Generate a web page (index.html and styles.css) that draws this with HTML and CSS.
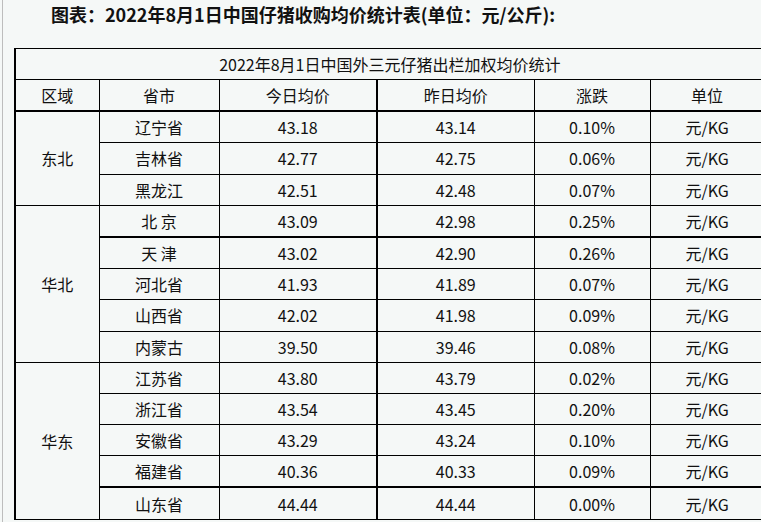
FILE: index.html
```html
<!DOCTYPE html>
<html lang="zh-CN">
<head>
<meta charset="utf-8">
<title>2022年8月1日中国仔猪收购均价统计表</title>
<link rel="stylesheet" href="styles.css">
</head>
<body>
<div class="page">
  <h2 class="heading">图表：2022年8月1日中国仔猪收购均价统计表(单位：元/公斤):</h2>
  <table class="price-table">
    <colgroup>
      <col class="c-region"><col class="c-prov"><col class="c-today"><col class="c-yest"><col class="c-chg"><col class="c-unit">
    </colgroup>
    <thead>
      <tr><th colspan="6" class="caption-cell">2022年8月1日中国外三元仔猪出栏加权均价统计</th></tr>
      <tr class="head-row"><th>区域</th><th>省市</th><th class="sep">今日均价</th><th>昨日均价</th><th>涨跌</th><th>单位</th></tr>
    </thead>
    <tbody>
      <tr><td rowspan="3">东北</td><td>辽宁省</td><td class="sep">43.18</td><td>43.14</td><td>0.10%</td><td>元/KG</td></tr>
      <tr><td>吉林省</td><td class="sep">42.77</td><td>42.75</td><td>0.06%</td><td>元/KG</td></tr>
      <tr><td>黑龙江</td><td class="sep">42.51</td><td>42.48</td><td>0.07%</td><td>元/KG</td></tr>
      <tr class="thick-row"><td rowspan="5" class="region">华北</td><td>北&nbsp;京</td><td class="sep">43.09</td><td>42.98</td><td>0.25%</td><td>元/KG</td></tr>
      <tr><td>天&nbsp;津</td><td class="sep">43.02</td><td>42.90</td><td>0.26%</td><td>元/KG</td></tr>
      <tr><td>河北省</td><td class="sep">41.93</td><td>41.89</td><td>0.07%</td><td>元/KG</td></tr>
      <tr><td>山西省</td><td class="sep">42.02</td><td>41.98</td><td>0.09%</td><td>元/KG</td></tr>
      <tr><td>内蒙古</td><td class="sep">39.50</td><td>39.46</td><td>0.08%</td><td>元/KG</td></tr>
      <tr><td rowspan="5" class="region">华东</td><td>江苏省</td><td class="sep">43.80</td><td>43.79</td><td>0.02%</td><td>元/KG</td></tr>
      <tr><td>浙江省</td><td class="sep">43.54</td><td>43.45</td><td>0.20%</td><td>元/KG</td></tr>
      <tr><td>安徽省</td><td class="sep">43.29</td><td>43.24</td><td>0.10%</td><td>元/KG</td></tr>
      <tr class="thick-row"><td>福建省</td><td class="sep">40.36</td><td>40.33</td><td>0.09%</td><td>元/KG</td></tr>
      <tr><td>山东省</td><td class="sep">44.44</td><td>44.44</td><td>0.00%</td><td>元/KG</td></tr>
    </tbody>
  </table>
</div>
</body>
</html>
```
FILE: styles.css
```css
html, body {
  margin: 0;
  padding: 0;
  background: #f5f8f7;
  overflow: hidden;
}

.page {
  margin-left: 2px;
  border-left: 1px solid #bdbdbd;
  padding-left: 11px;
  min-height: 522px;
  font-family: "Noto Sans CJK SC", "Noto Sans", sans-serif;
  color: #111;
}

.heading {
  margin: 0;
  padding: 2px 0 0 37px;
  height: 48px;
  box-sizing: border-box;
  font-size: 18px;
  line-height: 24px;
  font-weight: bold;
  color: #111;
}

.price-table {
  border-collapse: collapse;
  width: 749px;
  table-layout: fixed;
  font-size: 16px;
  border-top: 1px solid #000;
  border-left: 2px solid #000;
}

.c-region { width: 84px; }
.c-prov { width: 120px; }
.c-today { width: 158px; }
.c-yest { width: 157px; }
.c-chg { width: 116px; }
.c-unit { width: 114px; }

.price-table th,
.price-table td {
  border: 1px solid #000;
  padding: 0;
  height: 30.2px;
  text-align: center;
  vertical-align: middle;
  font-weight: normal;
  line-height: 20px;
  white-space: nowrap;
}

.price-table .caption-cell {
  height: 30px;
}

.head-row th {
  border-bottom: 2px solid #000;
}

.price-table .sep {
  border-right: 2px solid #000;
}

.thick-row td {
  border-bottom: 2px solid #000;
}

.thick-row td.region {
  border-bottom: 1px solid #000;
}
```
